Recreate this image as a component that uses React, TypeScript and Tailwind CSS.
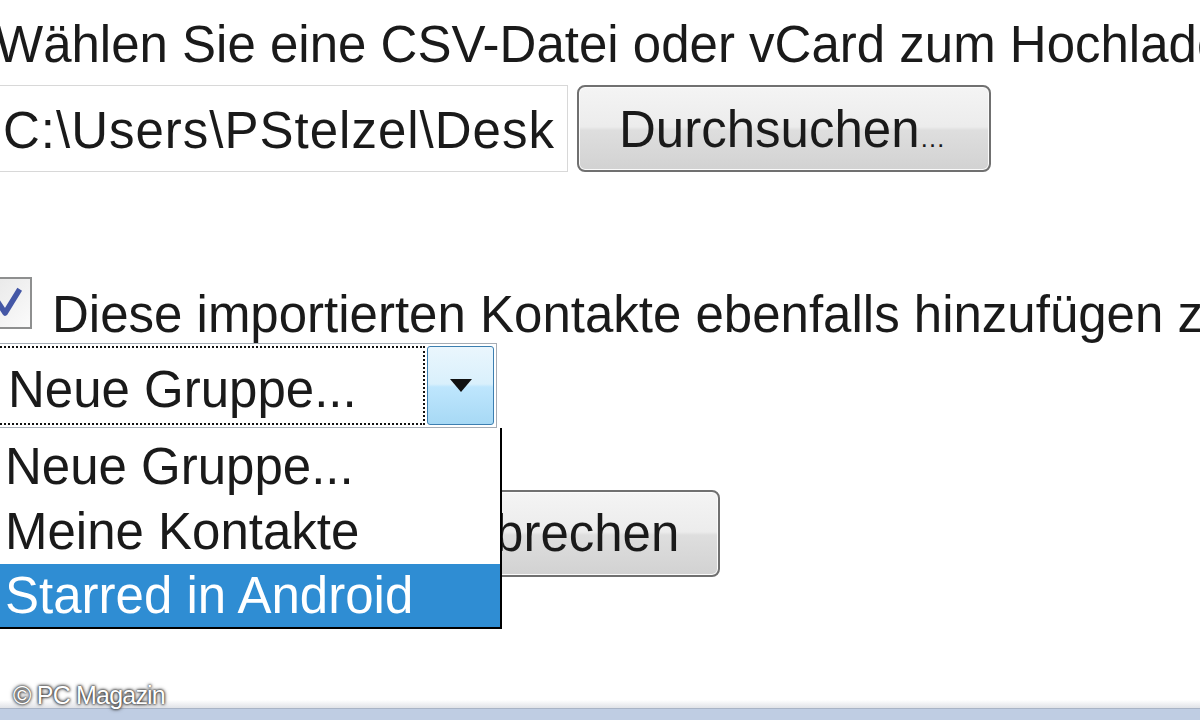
import { type FC } from "react";

const winButton =
  "h-[87px] shrink-0 rounded-[8px] border-2 border-[#707070] bg-[linear-gradient(to_bottom,#f4f4f4_0%,#ececec_48%,#dedede_52%,#d2d2d2_100%)] shadow-[inset_0_0_0_1px_#fbfbfb] leading-none whitespace-nowrap";

const groups = ["Neue Gruppe...", "Meine Kontakte", "Starred in Android"];

const Checkbox: FC = () => (
  <div className="-ml-[20px] h-[52px] w-[52px] shrink-0 border-2 border-[#8e8f8f] bg-[linear-gradient(135deg,#e6e6e6,#fbfbfb)] p-[3px]">
    <svg viewBox="0 0 46 46" className="h-full w-full">
      <path
        d="M14 22 L22 34 L38 8"
        fill="none"
        stroke="#4457a6"
        strokeWidth="6"
        strokeLinejoin="round"
      />
    </svg>
  </div>
);

const GroupSelect: FC = () => (
  <div className="relative -ml-[10px] w-[507px]">
    <div className="flex h-[85px] border border-[#a5acb5] bg-white p-[2px]">
      <div className="flex flex-1 items-center border-2 border-dotted border-[#111] pl-[13px] pt-[8px] leading-none whitespace-nowrap">
        Neue Gruppe...
      </div>
      <div className="ml-[2px] flex w-[67px] items-center justify-center rounded-[3px] border border-[#3c7fb1] bg-[linear-gradient(to_bottom,#eaf6fd_0%,#d9f0fc_48%,#bee6fd_52%,#a7d9f5_100%)]">
        <svg viewBox="0 0 22 14" className="h-[14px] w-[22px]">
          <polygon points="0,0 22,0 11,13" fill="#111" />
        </svg>
      </div>
    </div>

    <ul className="absolute left-0 top-full z-10 w-[512px] border-b-2 border-r-2 border-l border-black bg-white pt-[6px]">
      {groups.map((group, i) => (
        <li
          key={group}
          className={
            i === groups.length - 1
              ? "h-[63px] bg-[#2f8dd3] pl-[14px] leading-[63px] text-white whitespace-nowrap"
              : "h-[65px] pl-[14px] leading-[65px] whitespace-nowrap"
          }
        >
          {group}
        </li>
      ))}
    </ul>
  </div>
);

export default function App() {
  return (
    <div className="relative flex h-[720px] w-[1200px] flex-col overflow-hidden bg-white font-['Liberation_Sans',Arial,sans-serif] text-[51px] text-[#1a1a1a]">
      <div className="flex flex-col pt-[19px]">
        <p className="-ml-[5px] leading-none whitespace-nowrap">
          Wählen Sie eine CSV-Datei oder vCard zum Hochladen aus:
        </p>

        <div className="mt-[15px] flex gap-[9px]">
          <div className="-ml-[22px] flex h-[87px] w-[590px] shrink-0 items-center border border-[#d8d8d8] bg-white pl-[24px] pr-[12px] pt-[4px]">
            <span className="block flex-1 overflow-hidden leading-none whitespace-nowrap tracking-[1px]">
              C:\Users\PStelzel\Desktop\kontakte.csv
            </span>
          </div>
          <button className={`${winButton} w-[414px] pl-[40px] pt-[2px] text-left`}>
            Durchsuchen<span className="text-[26px]">…</span>
          </button>
        </div>

        <div className="mt-[105px] flex items-start gap-[20px]">
          <Checkbox />
          <p className="mt-[12px] leading-none whitespace-nowrap">
            Diese importierten Kontakte ebenfalls hinzufügen zu:
          </p>
        </div>

        <div className="mt-[3px]">
          <GroupSelect />
        </div>

        <div className="mt-[62px] flex">
          <button className={`${winButton} ml-[392px] w-[328px]`}>Abbrechen</button>
        </div>
      </div>

      <div className="mt-auto h-[8px] bg-[linear-gradient(to_bottom,#ffffff,#e0e2e7)]" />
      <div className="h-[12px] border-t border-[#a9b4c6] bg-[#bfcde3]" />

      <span className="absolute bottom-[12px] left-[13px] text-[25px] leading-none tracking-[-0.8px] text-white [text-shadow:0_0_2px_#333,0_0_3px_#333,0_0_4px_#555]">
        © PC Magazin
      </span>
    </div>
  );
}
